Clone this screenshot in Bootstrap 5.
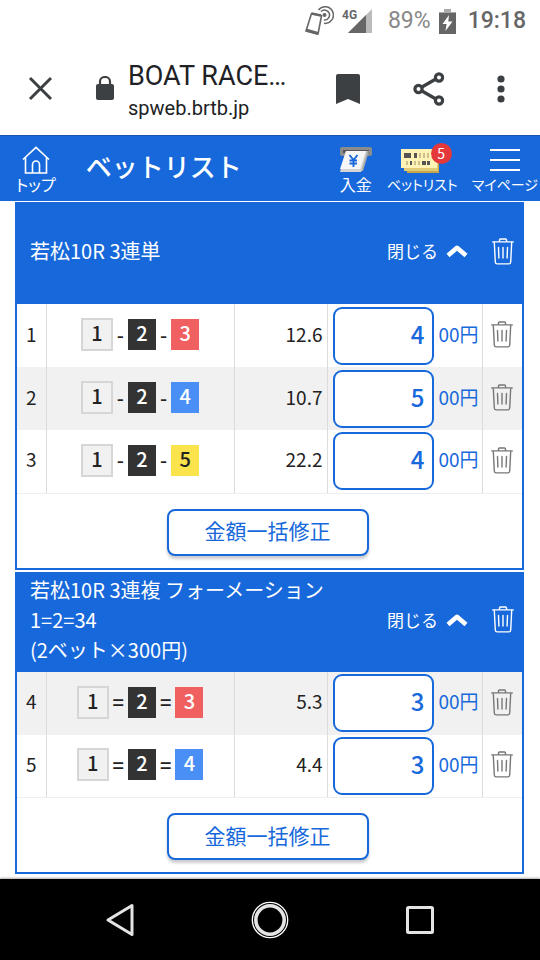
<!DOCTYPE html>
<html lang="ja">
<head>
<meta charset="utf-8">
<meta name="viewport" content="width=device-width, initial-scale=1">
<title>ベットリスト</title>
<link href="https://cdn.jsdelivr.net/npm/bootstrap@5.3.0/dist/css/bootstrap.min.css" rel="stylesheet">
<style>
:root { --brand: #1769db; --ink: #222; --line: #dcdcdc; }
body { font-family: "Noto Sans CJK JP", sans-serif; font-size: 20px; line-height: 30px; color: var(--ink); background: #fff; }
svg { display: block; flex: none; }
button { font-family: inherit; }
.plain-btn { border: 0; background: none; padding: 0; color: inherit; }

/* phone status line and browser bar */
.status-line { height: 42px; padding-right: 14px; font: 23px/42px Roboto, sans-serif; color: #666; }
.status-pct { color: #888; }
.status-clock { font-weight: 500; margin-left: 12px; }
.browser-bar { height: 93px; padding: 0 35px 0 28px; font-family: Roboto, sans-serif; color: #202124; }
.lock-icon { margin: 0 13px 0 42px; }
.page-title { font-size: 27px; line-height: 32px; padding-top: 6px; }
.page-host { font-size: 20px; line-height: 32px; }
.browser-tools { gap: 51px; }

/* site header */
.site-head { height: 66px; background: var(--brand); color: #fff; border-top: 1px solid #1857b0; padding: 0 2px 0 16px; }
.site-head h1 { font-size: 26px; line-height: 40px; font-weight: 500; margin-left: 30px; padding-bottom: 6px; }
.head-link { color: #fff; text-decoration: none; font-size: 16px; line-height: 20px; white-space: nowrap; font-feature-settings: "palt"; padding-top: 10px; }
.head-long { font-size: 14px; }
.head-icon { height: 28px; }
.head-group { gap: 14px; }
.count-dot { position: absolute; right: 6px; top: 7px; width: 21px; height: 21px; border-radius: 50%; background: #e5383b; font-size: 14px; line-height: 20px; text-align: center; }

/* bet panels */
.bet-list { padding: 1px 16px 0 15px; }
.bet-panel { border: 2px solid var(--brand); border-top: 0; margin-bottom: 2px; }
.bet-head { background: var(--brand); color: #fff; min-height: 100px; padding: 0 8px 4px 13px; }
.bet-head-tall { min-height: 102px; }
.bet-head h2 { font-size: 20px; line-height: 30px; font-weight: 400; }
.fold-btn { font-size: 17px; line-height: 24px; }
.bet-table { table-layout: fixed; width: 100%; }
.bet-table td { height: 63px; padding: 0 0 2px; vertical-align: middle; border-right: 1px solid var(--line); }
.bet-table td:last-child { border-right: 0; }
.bet-table .shaded { background: #f1f1f1; }
.bet-table tr:last-child td { border-bottom: 1px solid #eee; }
.col-no { width: 29px; }
.col-odds { width: 93px; }
.col-sum { width: 155px; }
.col-del { width: 40px; }
.bet-table .num-text, .unit { font-size: 19px; padding-bottom: 4px; }
.unit { color: var(--brand); }
.combo { gap: 4px; font-weight: 500; line-height: 28px; }
.boat { width: 28px; height: 31px; text-align: center; color: #fff; }
.boat-1 { width: 32px; height: 33px; background: #f1f1f1; border: 2px solid #d6d6d6; color: var(--ink); line-height: 26px; }
.boat-2 { background: #333; }
.boat-3 { background: #f16061; }
.boat-4 { background: #4a8ff5; }
.boat-5 { background: #fae34b; color: var(--ink); }
.sum-cell { padding: 2px 0 0 5px; }
.sum-input { width: 101px; height: 58px; border: 2px solid var(--brand); border-radius: 9px; color: var(--brand); font-size: 24px; font-weight: 500; text-align: right; padding: 0 7px 5px; background: #fff; margin-right: 5px; }
.del-btn { color: #777; }
.bet-foot { height: 74px; padding: 15px 4px 0 0; }
.fix-btn { width: 202px; height: 47px; border: 2px solid var(--brand); border-radius: 8px; background: #fff; color: var(--brand); font-size: 21px; line-height: 30px; padding: 0 0 4px; box-shadow: 0 3px 3px #0003; }

.phone-nav { height: 81px; background: #000; padding: 0 104px; box-shadow: 0 -1px 2px #0005; }
</style>
</head>
<body>
<svg width="0" height="0" class="position-absolute" aria-hidden="true">
  <symbol id="trash" viewBox="0 0 22 27">
    <g fill="none" stroke="currentColor" stroke-width="1.4" stroke-linecap="round" stroke-linejoin="round">
      <path d="M.7 3.9H21.3M7.5 3.6V2Q7.5 1 8.500 1H13.500Q14.500 1 14.500 2V3.600M2.300 4.200L3.300 24Q3.400 25.900 5.200 25.900H16.800Q18.600 25.900 18.700 24L19.700 4.200"/>
      <path d="M6.500 9.500L6.900 20M11 9.500V20M15.500 9.500L15.100 20"/>
    </g>
  </symbol>
  <symbol id="fold" viewBox="0 0 22 14"><path d="M2 11.500L11 3.800L20 11.500" fill="none" stroke="currentColor" stroke-width="4.600" stroke-linejoin="round"/></symbol>
</svg>

<div class="d-flex flex-column min-vh-100">
  <div class="status-line d-flex align-items-center justify-content-end">
    <svg class="me-2" width="30" height="30" viewBox="0 0 30 30" fill="none" stroke="#666">
      <path d="M7.500 7.500L17.500 9.800L14 28L2 25Z" stroke-width="1.600" stroke-linejoin="round"/>
      <path d="M2 24L14 27.500" stroke-width="3"/>
      <path d="M7.500 7.500L17 9.500" stroke-width="2.400"/>
      <circle cx="20.500" cy="9" r="2" fill="#666" stroke="none"/>
      <path d="M17 5.500A5 5 0 1 1 20 14M14.500 4A8.300 8.300 0 1 1 20 17.300" stroke-width="1.500"/>
    </svg>
    <svg class="me-3" width="30" height="24" viewBox="0 0 30 24"><path d="M6 24L30 0V24Z" fill="#bbb"/><path d="M6 24L24 6V24Z" fill="#666"/><text x="0" y="10" font-family="Roboto, sans-serif" font-size="12" font-weight="700" fill="#666">4G</text></svg>
    <span class="status-pct me-2">89%</span>
    <svg width="17" height="25" viewBox="0 0 17 25"><path d="M5 0H12V3H17V12H0V3H5Z" fill="#aaa"/><path d="M0 4H17V25H0Z" fill="#666"/><path d="M10 6L3.500 15H7.600L6.500 22L13.500 12.500H9.300Z" fill="#fff"/></svg>
    <span class="status-clock">19:18</span>
  </div>

  <header class="browser-bar d-flex align-items-center">
    <button class="plain-btn" aria-label="閉じる"><svg width="25" height="25" viewBox="0 0 25 25"><path d="M2 2L23 23M23 2L2 23" stroke="#3c4043" stroke-width="3"/></svg></button>
    <svg class="lock-icon" width="20" height="26" viewBox="0 0 20 26"><rect x="1" y="8" width="18" height="16" rx="2" fill="#3c4043"/><path d="M5 9V5.500A5 4.500 0 0 1 15 5.500V9" fill="none" stroke="#3c4043" stroke-width="2.200"/></svg>
    <div class="flex-grow-1 text-nowrap">
      <div class="page-title">BOAT RACE…</div>
      <div class="page-host">spweb.brtb.jp</div>
    </div>
    <div class="browser-tools d-flex align-items-center">
      <button class="plain-btn" aria-label="ブックマーク"><svg width="26" height="32" viewBox="0 0 26 32"><path d="M1 3Q1 1 3 1H23Q25 1 25 3V31L13 26L1 31Z" fill="#3c4043"/></svg></button>
      <button class="plain-btn" aria-label="共有"><svg width="34" height="36" viewBox="0 0 34 36" fill="none" stroke="#3c4043" stroke-width="3.200"><path d="M10 16L23 8.500M10 20L23 27.500"/><circle cx="6.500" cy="18" r="3.600"/><circle cx="27" cy="6.500" r="3.600"/><circle cx="27" cy="29.500" r="3.600"/></svg></button>
      <button class="plain-btn" aria-label="メニュー"><svg width="8" height="28" viewBox="0 0 8 28" fill="#3c4043"><circle cx="4" cy="4" r="3.600"/><circle cx="4" cy="14" r="3.600"/><circle cx="4" cy="24" r="3.600"/></svg></button>
    </div>
  </header>

  <nav class="site-head d-flex">
    <a href="#" class="head-link d-flex flex-column align-items-center">
      <svg class="head-icon" width="28" viewBox="0 0 28 28" fill="none" stroke="#fff" stroke-width="1.600"><path d="M1 13.500L14 1.300L27 13.500M3.500 11.500V27H10.500V18.500A3.500 3.500 0 0 1 17.500 18.500V27H24.500V11.500M10.500 27H17.500"/></svg>
      <span>トップ</span>
    </a>
    <h1 class="mb-0 align-self-center">ベットリスト</h1>
    <div class="head-group d-flex ms-auto">
      <a href="#" class="head-link d-flex flex-column align-items-center">
        <svg class="head-icon" width="34" viewBox="0 0 34 28"><rect x="1" y="1" width="32" height="9" rx="2" fill="#8c8c8c"/><rect x="4" y="4" width="26" height="3" fill="#555"/><path d="M27 5H30L24 25H21Z" fill="#aaa"/><path d="M7 5H28L22 26H1Z" fill="#d5d5d5"/><path d="M7 5H27L21 23H1Z" fill="#f6f6f6"/><path d="M10.500 9L14.500 14L18.500 9M14.500 14V21M10.500 14.500H18M10.500 17.500H18" fill="none" stroke="#1769db" stroke-width="1.900"/></svg>
        <span>入金</span>
      </a>
      <a href="#" class="head-link head-long position-relative d-flex flex-column align-items-center">
        <svg class="head-icon" width="42" viewBox="0 0 42 28"><path d="M6 6H38V27H6Z" fill="#c7a54d"/><path d="M3 5H37V25H3Z" fill="#e2cb77"/><path d="M0 3H36V22H0Z" fill="#fff3b5"/><g fill="#555"><path d="M3 7H10V12H3ZM13 7H16V12H13ZM21 15H25V19H21ZM26 15H29V19H26ZM9 15H11V19H9Z"/></g><g fill="#cdbf8b"><path d="M18 7H20V12H18ZM22 7H24V12H22ZM26 7H28V12H26ZM5 15H7V19H5ZM13 15H15V19H13ZM17 15H19V19H17Z"/></g></svg>
        <span>ベットリスト</span>
        <span class="count-dot">5</span>
      </a>
      <a href="#" class="head-link head-long d-flex flex-column align-items-center">
        <svg class="head-icon" width="32" viewBox="0 0 32 28" stroke="#fff" stroke-width="2"><path d="M1 4H31M1 14H31M1 24H31"/></svg>
        <span>マイページ</span>
      </a>
    </div>
  </nav>

  <main class="bet-list">
    <section class="bet-panel">
      <div class="bet-head bet-head-tall d-flex align-items-center">
        <h2 class="mb-0 flex-grow-1">若松10R 3連単</h2>
        <button class="plain-btn fold-btn d-flex align-items-center gap-2 me-4">閉じる<svg width="22" height="14"><use href="#fold"/></svg></button>
        <button class="plain-btn" aria-label="削除"><svg width="22" height="27"><use href="#trash"/></svg></button>
      </div>
      <table class="bet-table">
        <colgroup><col class="col-no"><col><col class="col-odds"><col class="col-sum"><col class="col-del"></colgroup>
        <tbody>
          <tr>
            <td class="text-center num-text">1</td>
            <td><div class="combo d-flex justify-content-center align-items-center"><span class="boat boat-1">1</span>-<span class="boat boat-2">2</span>-<span class="boat boat-3">3</span></div></td>
            <td class="text-end num-text pe-1">12.6</td>
            <td><div class="sum-cell d-flex align-items-center"><input class="sum-input" id="s1" value="4" inputmode="numeric"><label class="unit" for="s1">00円</label></div></td>
            <td><button class="plain-btn del-btn d-block mx-auto" aria-label="削除"><svg width="22" height="27"><use href="#trash"/></svg></button></td>
          </tr>
          <tr class="shaded">
            <td class="text-center num-text">2</td>
            <td><div class="combo d-flex justify-content-center align-items-center"><span class="boat boat-1">1</span>-<span class="boat boat-2">2</span>-<span class="boat boat-4">4</span></div></td>
            <td class="text-end num-text pe-1">10.7</td>
            <td><div class="sum-cell d-flex align-items-center"><input class="sum-input" id="s2" value="5" inputmode="numeric"><label class="unit" for="s2">00円</label></div></td>
            <td><button class="plain-btn del-btn d-block mx-auto" aria-label="削除"><svg width="22" height="27"><use href="#trash"/></svg></button></td>
          </tr>
          <tr>
            <td class="text-center num-text">3</td>
            <td><div class="combo d-flex justify-content-center align-items-center"><span class="boat boat-1">1</span>-<span class="boat boat-2">2</span>-<span class="boat boat-5">5</span></div></td>
            <td class="text-end num-text pe-1">22.2</td>
            <td><div class="sum-cell d-flex align-items-center"><input class="sum-input" id="s3" value="4" inputmode="numeric"><label class="unit" for="s3">00円</label></div></td>
            <td><button class="plain-btn del-btn d-block mx-auto" aria-label="削除"><svg width="22" height="27"><use href="#trash"/></svg></button></td>
          </tr>
        </tbody>
      </table>
      <div class="bet-foot d-flex justify-content-center align-items-start"><button class="fix-btn">金額一括修正</button></div>
    </section>

    <section class="bet-panel">
      <div class="bet-head d-flex align-items-center">
        <h2 class="mb-0 flex-grow-1">若松10R 3連複 フォーメーション<br>1=2=34<br>(2ベット×300円)</h2>
        <button class="plain-btn fold-btn d-flex align-items-center gap-2 me-4">閉じる<svg width="22" height="14"><use href="#fold"/></svg></button>
        <button class="plain-btn" aria-label="削除"><svg width="22" height="27"><use href="#trash"/></svg></button>
      </div>
      <table class="bet-table">
        <colgroup><col class="col-no"><col><col class="col-odds"><col class="col-sum"><col class="col-del"></colgroup>
        <tbody>
          <tr class="shaded">
            <td class="text-center num-text">4</td>
            <td><div class="combo d-flex justify-content-center align-items-center"><span class="boat boat-1">1</span>=<span class="boat boat-2">2</span>=<span class="boat boat-3">3</span></div></td>
            <td class="text-end num-text pe-1">5.3</td>
            <td><div class="sum-cell d-flex align-items-center"><input class="sum-input" id="s4" value="3" inputmode="numeric"><label class="unit" for="s4">00円</label></div></td>
            <td><button class="plain-btn del-btn d-block mx-auto" aria-label="削除"><svg width="22" height="27"><use href="#trash"/></svg></button></td>
          </tr>
          <tr>
            <td class="text-center num-text">5</td>
            <td><div class="combo d-flex justify-content-center align-items-center"><span class="boat boat-1">1</span>=<span class="boat boat-2">2</span>=<span class="boat boat-4">4</span></div></td>
            <td class="text-end num-text pe-1">4.4</td>
            <td><div class="sum-cell d-flex align-items-center"><input class="sum-input" id="s5" value="3" inputmode="numeric"><label class="unit" for="s5">00円</label></div></td>
            <td><button class="plain-btn del-btn d-block mx-auto" aria-label="削除"><svg width="22" height="27"><use href="#trash"/></svg></button></td>
          </tr>
        </tbody>
      </table>
      <div class="bet-foot d-flex justify-content-center align-items-start"><button class="fix-btn">金額一括修正</button></div>
    </section>
  </main>

  <footer class="phone-nav mt-auto d-flex align-items-center justify-content-between">
    <button class="plain-btn" aria-label="戻る"><svg width="32" height="34" viewBox="0 0 32 34"><path d="M4 17L28 2.500V31.500Z" fill="none" stroke="#e4e4e4" stroke-width="3" stroke-linejoin="round"/></svg></button>
    <button class="plain-btn" aria-label="ホーム"><svg width="38" height="38" viewBox="0 0 38 38" fill="none"><circle cx="19" cy="19" r="17.700" stroke="#fff" stroke-width="1.300"/><circle cx="19" cy="19" r="14.200" stroke="#e4e4e4" stroke-width="3.600"/></svg></button>
    <button class="plain-btn" aria-label="履歴"><svg width="32" height="32" viewBox="0 0 32 32"><rect x="3.500" y="3.500" width="25" height="25" rx="1" fill="none" stroke="#e4e4e4" stroke-width="3"/></svg></button>
  </footer>
</div>
<script src="https://cdn.jsdelivr.net/npm/bootstrap@5.3.0/dist/js/bootstrap.bundle.min.js"></script>
</body>
</html>
